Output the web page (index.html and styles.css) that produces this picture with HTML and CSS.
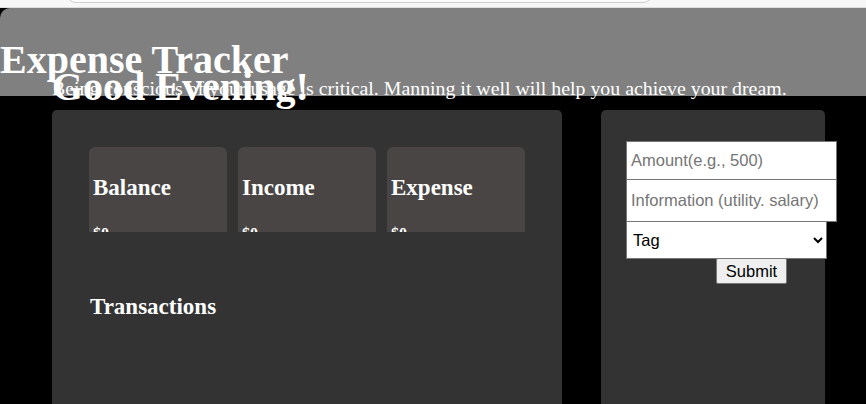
FILE: index.html
```
<!DOCTYPE html>
<html lang="en">
<head>
<meta charset="utf-8">
<title>Expense Tracker</title>
<link rel="stylesheet" href="styles.css">
</head>
<body>
<div class="topbar"><div class="searchbox"></div></div>
<header class="header">
  <h1 class="title">Expense Tracker</h1>
</header>
<main class="main">
  <section class="greeting">
    <h1 class="greeting-title">Good Evening!</h1>
    <p class="greeting-text">Being conscious of your usage is critical. Manning it well will help you achieve your dream.</p>
  </section>
  <div class="content">
    <section class="panel panel-left">
      <div class="stats">
        <div class="stat">
          <h3 class="stat-title">Balance</h3>
          <p class="stat-value">$0</p>
        </div>
        <div class="stat">
          <h3 class="stat-title">Income</h3>
          <p class="stat-value">$0</p>
        </div>
        <div class="stat">
          <h3 class="stat-title">Expense</h3>
          <p class="stat-value">$0</p>
        </div>
      </div>
      <h3 class="transactions-title">Transactions</h3>
    </section>
    <section class="panel panel-right">
      <form class="form">
        <input class="field field-amount" type="text" placeholder="Amount(e.g., 500)">
        <input class="field field-info" type="text" placeholder="Information (utility. salary)">
        <select class="field field-tag">
          <option>Tag</option>
        </select>
        <button class="submit" type="button">Submit</button>
      </form>
    </section>
  </div>
</main>
</body>
</html>
```
FILE: styles.css
```
html, body {
  margin: 0;
  padding: 0;
}
body {
  background: #000;
  font-family: "Liberation Serif", "Times New Roman", serif;
  color: #fff;
  overflow: hidden;
  height: 404px;
}
.topbar {
  height: 7px;
  background: #f7f7f7;
  border-bottom: 1px solid #dedede;
  overflow: hidden;
}
.searchbox {
  margin-left: 66px;
  width: 585px;
  height: 20px;
  margin-top: -19px;
  border: 1px solid #cfcfcf;
  border-radius: 10px;
  background: #fbfbfb;
}
.header {
  background: #808080;
  height: 88px;
  border-top-left-radius: 10px;
  padding-top: 29px;
  box-sizing: border-box;
}
.title {
  margin: 0;
  font-size: 40px;
  font-weight: bold;
  line-height: 46px;
  color: #fff;
}
.greeting {
  padding-left: 52px;
  margin-top: -32px;
}
.greeting-title {
  margin: 0;
  font-size: 40px;
  font-weight: bold;
  line-height: 46px;
}
.greeting-text {
  margin: -33px 0 0 0;
  font-size: 19.85px;
  line-height: 23px;
}
.content {
  display: flex;
  gap: 39px;
  padding-left: 52px;
  margin-top: 10px;
}
.panel {
  background: #333333;
  border-radius: 5px;
  height: 320px;
  box-sizing: border-box;
}
.panel-left {
  width: 510px;
  padding: 37px 0 0 37px;
}
.panel-right {
  width: 224px;
  padding: 31px 0 0 25px;
}
.stats {
  display: flex;
  gap: 11px;
  height: 85px;
  overflow: hidden;
}
.stat {
  width: 138px;
  flex: none;
  background: #484544;
  border-radius: 6px;
  padding: 0 4px;
  box-sizing: border-box;
  height: 140px;
}
.stat-title {
  margin: 28px 0 0 0;
  font-size: 23px;
  line-height: 26px;
  font-weight: bold;
}
.stat-value {
  margin: 24px 0 0 0;
  font-size: 16px;
  font-weight: bold;
}
.transactions-title {
  margin: 62px 0 0 1px;
  font-size: 23px;
  line-height: 26px;
  font-weight: bold;
}
.form {
  display: flex;
  flex-direction: column;
  align-items: flex-start;
}
.field {
  display: block;
  box-sizing: border-box;
  margin: 0;
  font-family: "Liberation Sans", Arial, sans-serif;
  font-size: 16.5px;
  color: #000;
  background: #fff;
  border: 1px solid #767676;
  border-radius: 0;
  padding: 0 4px;
}
.field::placeholder {
  color: #757575;
}
.field-amount {
  width: 211px;
  height: 39px;
}
.field-info {
  width: 211px;
  height: 43px;
  margin-top: -1px;
}
.field-tag {
  width: 201px;
  height: 38px;
  margin-top: -1px;
  padding: 0 2px;
}
.submit {
  margin: -1px 0 0 90px;
  height: 26px;
  width: 71px;
  padding: 0;
  font-family: "Liberation Sans", Arial, sans-serif;
  font-size: 16.5px;
  color: #000;
  background: #efefef;
  border: 1px solid #767676;
  border-radius: 2px;
}
```
